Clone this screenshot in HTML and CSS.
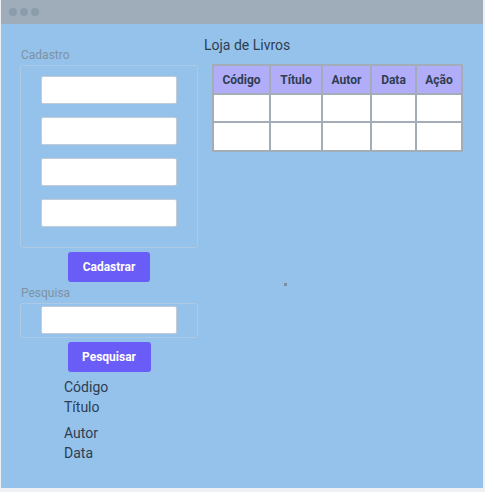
FILE: index.html
```html
<!DOCTYPE html>
<html lang="pt">
<head>
<meta charset="utf-8">
<title>Loja de Livros</title>
<link rel="stylesheet" href="styles.css">
</head>
<body>
<div class="window">
  <div class="titlebar">
    <span class="dot"></span><span class="dot"></span><span class="dot"></span>
  </div>
  <div class="content">
    <div class="left">
      <div class="label label-cad">Cadastro</div>
      <div class="box box-cad">
        <input class="field" type="text">
        <input class="field" type="text">
        <input class="field" type="text">
        <input class="field" type="text">
      </div>
      <button class="btn btn-cad">Cadastrar</button>
      <div class="label label-pes">Pesquisa</div>
      <div class="box box-pes">
        <input class="field" type="text">
      </div>
      <button class="btn btn-pes">Pesquisar</button>
      <ul class="options">
        <li>Código</li>
        <li>Título</li>
        <li class="gap">Autor</li>
        <li>Data</li>
      </ul>
    </div>
    <div class="right">
      <h1 class="title">Loja de Livros</h1>
      <table class="books">
        <thead>
          <tr><th class="c1">Código</th><th class="c2">Título</th><th class="c3">Autor</th><th class="c4">Data</th><th class="c5">Ação</th></tr>
        </thead>
        <tbody>
          <tr class="r1"><td></td><td></td><td></td><td></td><td></td></tr>
          <tr class="r2"><td></td><td></td><td></td><td></td><td></td></tr>
        </tbody>
      </table>
    </div>
    <span class="speck"></span>
  </div>
</div>
</body>
</html>
```

FILE: styles.css
```css
html, body {
  margin: 0;
  padding: 0;
  background: #eef0f3;
}
body {
  font-family: Roboto, "Liberation Sans", sans-serif;
  width: 485px;
  height: 492px;
  overflow: hidden;
}
.window {
  margin-left: 1px;
  width: 482px;
  height: 488px;
  display: flex;
  flex-direction: column;
  background: #94c2ea;
}
.titlebar {
  height: 24px;
  background: #9eadb9;
  display: flex;
  align-items: center;
  gap: 3px;
  padding-left: 8px;
  flex-shrink: 0;
}
.dot {
  width: 8px;
  height: 8px;
  border-radius: 50%;
  background: #8b9cab;
}
.content {
  position: relative;
  flex: 1;
  display: flex;
  padding-left: 19px;
}
.left {
  width: 178px;
  display: flex;
  flex-direction: column;
  align-items: center;
}
.label {
  align-self: flex-start;
  font-size: 12px;
  line-height: 14px;
  color: #7f92a5;
  padding-left: 1px;
}
.label-cad { margin-top: 24px; }
.label-pes { margin-top: 4px; }
.box {
  box-sizing: border-box;
  width: 178px;
  border: 1.5px solid #aec9e3;
  border-radius: 3px;
  display: flex;
  flex-direction: column;
  align-items: center;
}
.box-cad {
  margin-top: 3px;
  height: 183px;
  padding-top: 10px;
  gap: 13px;
}
.box-pes {
  margin-top: 3px;
  height: 35px;
  padding-top: 2px;
}
.field {
  box-sizing: border-box;
  width: 136px;
  height: 28px;
  margin: 0;
  background: #fff;
  border: 1px solid #c3ccd6;
  border-radius: 2px;
  padding: 0;
}
.btn {
  box-sizing: border-box;
  height: 30px;
  margin-top: 4px;
  border: none;
  border-radius: 3px;
  background: #6a5cf6;
  color: #fff;
  font-family: Roboto, "Liberation Sans", sans-serif;
  font-weight: 700;
  font-size: 12px;
  padding: 0;
}
.btn-cad { width: 82px; }
.btn-pes { width: 83px; }
.options {
  align-self: flex-start;
  list-style: none;
  margin: 5px 0 0 44px;
  padding: 0;
  font-size: 14px;
  line-height: 20px;
  color: #2e3d52;
}
.options .gap { margin-top: 6px; }
.right {
  margin-left: 6px;
  display: flex;
  flex-direction: column;
}
.title {
  margin: 12px 0 0 0;
  font-size: 14px;
  font-weight: 400;
  line-height: 18px;
  color: #2e3d52;
}
.books {
  margin: 10px 0 0 8px;
  border-collapse: collapse;
  border: 2px solid #a3adb8;
}
.books th, .books td {
  border: 2px solid #a3adb8;
  padding: 0;
}
.books th {
  background: #b1adf8;
  height: 27px;
  font-size: 12px;
  font-weight: 700;
  color: #2e3d52;
  text-align: center;
}
.books td { background: #fff; }
.books .r1 td { height: 26px; }
.books .r2 td { height: 27px; }
.c1 { width: 55px; }
.c2 { width: 50px; }
.c3 { width: 47px; }
.c4 { width: 43px; }
.c5 { width: 44px; }
.speck {
  position: absolute;
  left: 283px;
  top: 259px;
  width: 3px;
  height: 3px;
  background: #7f8e9e;
}
```
